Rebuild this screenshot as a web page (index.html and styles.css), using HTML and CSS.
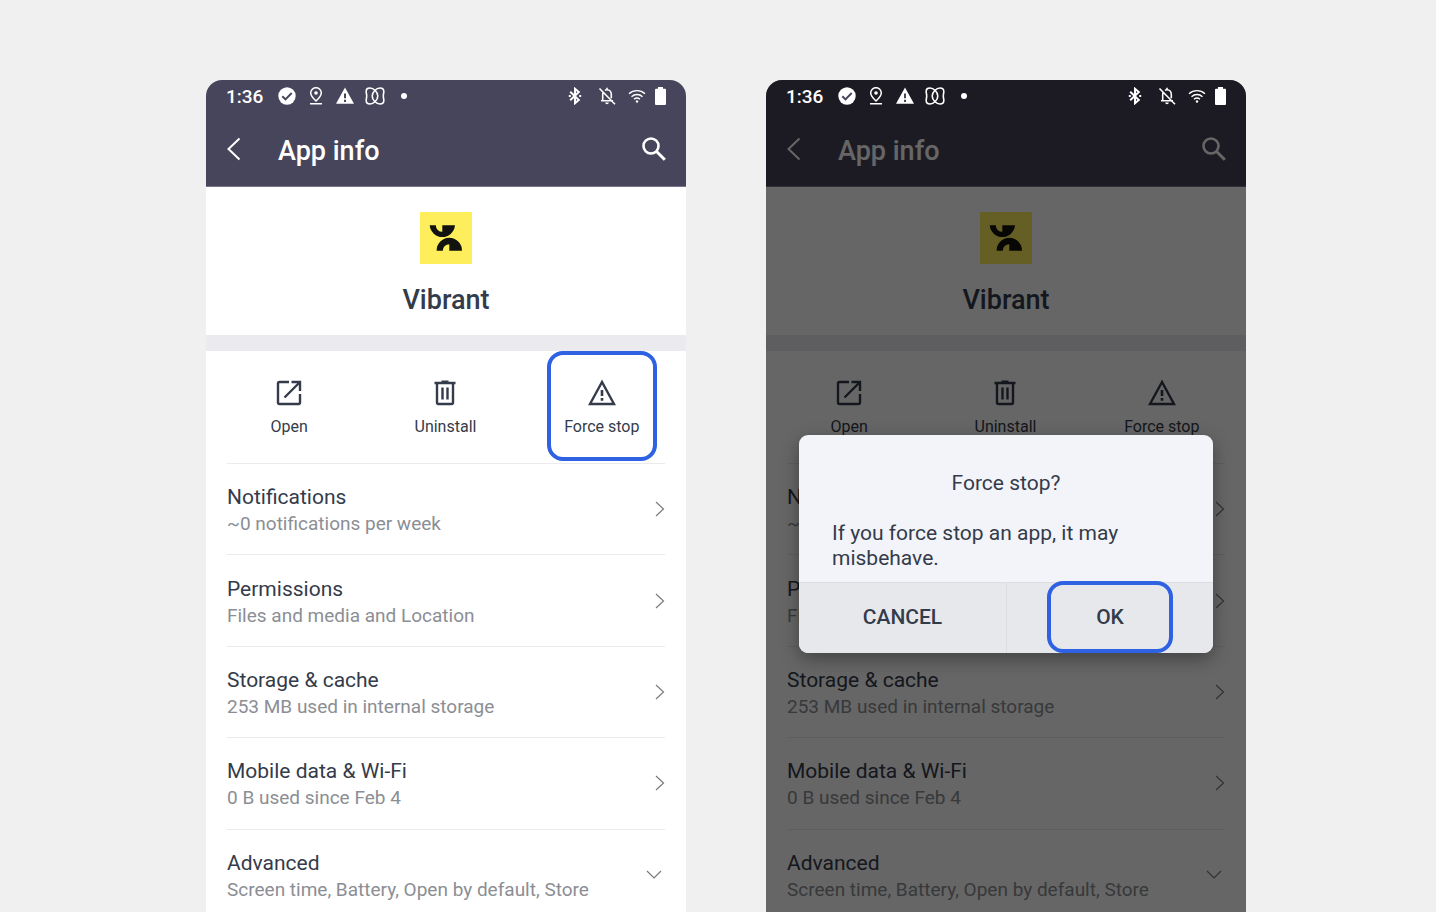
FILE: index.html
```
<!DOCTYPE html>
<html lang="en">
<head>
    <meta charset="UTF-8">
    <meta name="viewport" content="width=device-width, initial-scale=1.0">
    <title>App info</title>
    <link rel="stylesheet" href="styles.css">
</head>
<body>
    <!-- Icons shared by both phones -->
    <svg class="sprite" aria-hidden="true">
        <symbol id="i-check" viewBox="0 0 18 18">
            <circle cx="9" cy="9" r="8.7" fill="currentColor"/>
            <path class="cut" d="M4.300 9.200l3.200 3.200 6.200-6.400" fill="none" stroke-width="2"/>
        </symbol>
        <symbol id="i-pin" viewBox="0 0 18 18">
            <path d="M9 14C5.600 10.800 3.700 8.600 3.700 6a5.300 5.300 0 0 1 10.600 0c0 2.600-1.900 4.800-5.300 8zM3 16.800h12" fill="none" stroke="currentColor" stroke-width="1.500"/>
            <circle cx="9" cy="6" r="1.800" fill="currentColor"/>
        </symbol>
        <symbol id="i-alert" viewBox="0 0 18 18">
            <path d="M9 .5l9 16.300H0z" fill="currentColor"/>
            <path class="cut" d="M9 6.500v4.700M9 12.800v2.200" fill="none" stroke-width="2"/>
        </symbol>
        <symbol id="i-loop" viewBox="0 0 20 18">
            <path d="M5 1C2 1 1.200 2 1.200 4.500c0 2 .5 2.500.5 4.500s-.5 2.500-.5 4.500C1.200 16 2 17 5 17c3.500 0 7.800-4 7.800-8S8.500 1 5 1z" fill="none" stroke="currentColor" stroke-width="1.600"/>
            <path d="M15 1c3 0 3.800 1 3.800 3.500 0 2-.5 2.500-.5 4.500s.5 2.500.5 4.500c0 2.500-.8 3.500-3.800 3.500-3.500 0-7.800-4-7.800-8S11.500 1 15 1z" fill="none" stroke="currentColor" stroke-width="1.600"/>
        </symbol>
        <symbol id="i-bluetooth" viewBox="0 0 14 18">
            <path d="M2.200 4.800l8.600 8.200L7 16.200V1.800L10.800 5l-8.600 8.200" fill="none" stroke="currentColor" stroke-width="2"/>
            <path d="M0.800 8h2v2h-2zM11.200 8h2v2h-2z" fill="currentColor"/>
        </symbol>
        <symbol id="i-bell-off" viewBox="0 0 18 18">
            <path d="M3 13.800h12M4.700 13.800V7.500c0-1 .2-1.800.7-2.500M7 3.300c.6-.4 1.300-.6 2-.6 2.500 0 4.300 2 4.300 4.800v3.800M9 .8v2M1.500 1.500l15.500 15.800" fill="none" stroke="currentColor" stroke-width="1.600"/>
            <path d="M7.200 15.500h3.600a1.800 1.800 0 0 1-3.600 0z" fill="currentColor"/>
        </symbol>
        <symbol id="i-wifi" viewBox="0 0 18 14">
            <path d="M1 4.800c4.600-4.200 11.400-4.200 16 0M3.500 7.700c3.200-2.900 7.800-2.900 11 0M6 10.300c1.800-1.500 4.200-1.500 6 0" fill="none" stroke="currentColor" stroke-width="1.400"/>
            <circle cx="9" cy="12.500" r="1.200" fill="currentColor"/>
        </symbol>
        <symbol id="i-battery" viewBox="0 0 11 18">
            <path d="M3 0h5v1.800h2q1 0 1 1V17q0 1-1 1H1q-1 0-1-1V2.800q0-1 1-1h2z" fill="currentColor"/>
        </symbol>
        <symbol id="i-back" viewBox="0 0 14 24">
            <path d="M12.500 1.500L1.500 12l11 10.500" fill="none" stroke="currentColor" stroke-width="2"/>
        </symbol>
        <symbol id="i-search" viewBox="0 0 24 24">
            <circle cx="9" cy="9" r="7.500" fill="none" stroke="currentColor" stroke-width="2.600"/>
            <path d="M14.300 14.300l8.500 8.500" stroke="currentColor" stroke-width="3"/>
        </symbol>
        <symbol id="i-logo" viewBox="0 0 52 52">
            <path d="M0 0h52v52H0z" fill="#ffee5c"/>
            <path d="M9.700 13.300h6.100a6.500 6.500 0 0 0 6.500 6.500v-6.500H35a12.700 12.900 0 0 1-25.300 0zM16.600 38.700a12.700 12.900 0 0 1 25.400 0H29.300v-6.500a6.500 6.500 0 0 0-6.500 6.500z" fill="#121310"/>
        </symbol>
        <symbol id="i-open" viewBox="0 0 28 28">
            <path d="M14 3H4.500Q3 3 3 4.500v19Q3 25 4.500 25h19q1.500 0 1.500-1.500V15M16.500 3H25v9M25 3L9.500 18.500" fill="none" stroke="currentColor" stroke-width="2.400"/>
        </symbol>
        <symbol id="i-trash" viewBox="0 0 28 28">
            <path d="M3.500 4h21M10.500 2.800h7M6 4v19.500Q6 25 7.500 25h13q1.500 0 1.500-1.500V4M11.500 8.500v12M16.500 8.500v12" fill="none" stroke="currentColor" stroke-width="2.400"/>
        </symbol>
        <symbol id="i-warning" viewBox="0 0 28 28">
            <path d="M14 3L2 25h24z" fill="none" stroke="currentColor" stroke-width="2.400"/>
            <path d="M14 11v6M14 19v2.800" stroke="currentColor" stroke-width="2.600"/>
        </symbol>
        <symbol id="i-right" viewBox="0 0 10 16">
            <path d="M1 1l7.500 7L1 15" fill="none" stroke="currentColor" stroke-width="1.200"/>
        </symbol>
        <symbol id="i-down" viewBox="0 0 16 10">
            <path d="M1 1l7 7 7-7" fill="none" stroke="currentColor" stroke-width="1.200"/>
        </symbol>
    </svg>

    <main class="stage">
        <section class="phone">
            <header class="top">
                <div class="status">
                    <span class="time">1:36</span>
                    <svg class="s18"><use href="#i-check"/></svg>
                    <svg class="s18"><use href="#i-pin"/></svg>
                    <svg class="s18"><use href="#i-alert"/></svg>
                    <svg class="s20"><use href="#i-loop"/></svg>
                    <span class="dot"></span>
                    <div class="status-right">
                        <svg class="s14"><use href="#i-bluetooth"/></svg>
                        <svg class="s18"><use href="#i-bell-off"/></svg>
                        <svg class="wifi"><use href="#i-wifi"/></svg>
                        <svg class="battery"><use href="#i-battery"/></svg>
                    </div>
                </div>
                <div class="title-bar">
                    <button class="icon-btn" aria-label="Back"><svg class="back"><use href="#i-back"/></svg></button>
                    <h1>App info</h1>
                    <button class="icon-btn" aria-label="Search"><svg class="search"><use href="#i-search"/></svg></button>
                </div>
            </header>
            <div class="app">
                <svg class="logo"><use href="#i-logo"/></svg>
                <h2>Vibrant</h2>
            </div>
            <div class="actions">
                <button class="action"><svg><use href="#i-open"/></svg>Open</button>
                <button class="action"><svg><use href="#i-trash"/></svg>Uninstall</button>
                <button class="action highlight"><svg><use href="#i-warning"/></svg>Force stop</button>
            </div>
            <nav class="settings">
                <a href="#" class="row">
                    <span class="label">Notifications<small>~0 notifications per week</small></span>
                    <svg class="right"><use href="#i-right"/></svg>
                </a>
                <a href="#" class="row">
                    <span class="label">Permissions<small>Files and media and Location</small></span>
                    <svg class="right"><use href="#i-right"/></svg>
                </a>
                <a href="#" class="row">
                    <span class="label">Storage &amp; cache<small>253 MB used in internal storage</small></span>
                    <svg class="right"><use href="#i-right"/></svg>
                </a>
                <a href="#" class="row">
                    <span class="label">Mobile data &amp; Wi-Fi<small>0 B used since Feb 4</small></span>
                    <svg class="right"><use href="#i-right"/></svg>
                </a>
                <a href="#" class="row">
                    <span class="label">Advanced<small>Screen time, Battery, Open by default, Store</small></span>
                    <svg class="down"><use href="#i-down"/></svg>
                </a>
            </nav>
        </section>

        <section class="phone dimmed">
            <header class="top">
                <div class="status">
                    <span class="time">1:36</span>
                    <svg class="s18"><use href="#i-check"/></svg>
                    <svg class="s18"><use href="#i-pin"/></svg>
                    <svg class="s18"><use href="#i-alert"/></svg>
                    <svg class="s20"><use href="#i-loop"/></svg>
                    <span class="dot"></span>
                    <div class="status-right">
                        <svg class="s14"><use href="#i-bluetooth"/></svg>
                        <svg class="s18"><use href="#i-bell-off"/></svg>
                        <svg class="wifi"><use href="#i-wifi"/></svg>
                        <svg class="battery"><use href="#i-battery"/></svg>
                    </div>
                </div>
                <div class="title-bar">
                    <button class="icon-btn" aria-label="Back"><svg class="back"><use href="#i-back"/></svg></button>
                    <h1>App info</h1>
                    <button class="icon-btn" aria-label="Search"><svg class="search"><use href="#i-search"/></svg></button>
                </div>
            </header>
            <div class="app">
                <svg class="logo"><use href="#i-logo"/></svg>
                <h2>Vibrant</h2>
            </div>
            <div class="actions">
                <button class="action"><svg><use href="#i-open"/></svg>Open</button>
                <button class="action"><svg><use href="#i-trash"/></svg>Uninstall</button>
                <button class="action"><svg><use href="#i-warning"/></svg>Force stop</button>
            </div>
            <nav class="settings">
                <a href="#" class="row">
                    <span class="label">Notifications<small>~0 notifications per week</small></span>
                    <svg class="right"><use href="#i-right"/></svg>
                </a>
                <a href="#" class="row">
                    <span class="label">Permissions<small>Files and media and Location</small></span>
                    <svg class="right"><use href="#i-right"/></svg>
                </a>
                <a href="#" class="row">
                    <span class="label">Storage &amp; cache<small>253 MB used in internal storage</small></span>
                    <svg class="right"><use href="#i-right"/></svg>
                </a>
                <a href="#" class="row">
                    <span class="label">Mobile data &amp; Wi-Fi<small>0 B used since Feb 4</small></span>
                    <svg class="right"><use href="#i-right"/></svg>
                </a>
                <a href="#" class="row">
                    <span class="label">Advanced<small>Screen time, Battery, Open by default, Store</small></span>
                    <svg class="down"><use href="#i-down"/></svg>
                </a>
            </nav>
            <div class="scrim"></div>
            <div class="dialog" role="dialog" aria-labelledby="dialog-title">
                <div class="dialog-body">
                    <h3 id="dialog-title">Force stop?</h3>
                    <p>If you force stop an app, it may misbehave.</p>
                </div>
                <div class="dialog-buttons">
                    <div class="cell"><button>CANCEL</button></div>
                    <div class="cell"><button class="highlight">OK</button></div>
                </div>
            </div>
        </section>
    </main>
</body>
</html>
```
FILE: styles.css
```
* {
    box-sizing: border-box;
}
body {
    margin: 0;
    background-color: #f0f0f0;
    font-family: Roboto, "Liberation Sans", sans-serif;
    color: #343b4a;
}
h1, h2, h3, p {
    margin: 0;
}
button {
    padding: 0;
    border: none;
    background: none;
    color: inherit;
    font-family: inherit;
    cursor: pointer;
}
svg {
    display: block;
    flex: none;
}
.sprite {
    position: absolute;
    width: 0;
    height: 0;
}
.stage {
    display: grid;
    grid-template-columns: 1fr 1fr;
    gap: 80px;
    height: 100vh;
    padding: 80px 190px 0 206px;
    overflow: hidden;
}
.phone {
    position: relative;
    min-height: 0;
    background-color: #fff;
    border-radius: 16px 16px 0 0;
    overflow: hidden;
}

/* status bar and title */
.top {
    height: 107px;
    background-color: #47455b;
    border-bottom: 1px solid #77758a;
    color: #fff;
}
.status {
    position: relative;
    z-index: 2;
    display: flex;
    align-items: center;
    gap: 11px;
    height: 32px;
    padding: 0 20px;
}
.time {
    margin-right: 4px;
    font-size: 19px;
    font-weight: 500;
}
.cut {
    stroke: #47455b;
}
.s14 {
    width: 14px;
    height: 18px;
    margin-right: 4px;
}
.s18 {
    width: 18px;
    height: 18px;
}
.s20 {
    width: 20px;
    height: 18px;
}
.dot {
    width: 6px;
    height: 6px;
    margin-left: 5px;
    border-radius: 50%;
    background-color: #fff;
}
.status-right {
    display: flex;
    align-items: center;
    gap: 12px;
    margin-left: auto;
}
.wifi {
    width: 18px;
    height: 14px;
    margin-right: -3px;
}
.battery {
    width: 11px;
    height: 18px;
}
.title-bar {
    display: flex;
    align-items: center;
    height: 74px;
    padding: 0 20px 0 21px;
}
.title-bar h1 {
    flex: 1;
    margin-left: 37px;
    padding-top: 4px;
    font-size: 27px;
    font-weight: 500;
    line-height: 32px;
}
.back {
    width: 14px;
    height: 24px;
}
.search {
    width: 24px;
    height: 24px;
}

/* app name */
.app {
    display: flex;
    flex-direction: column;
    align-items: center;
    height: 164px;
    padding-top: 25px;
    border-bottom: 16px solid #ebebef;
}
.logo {
    width: 52px;
    height: 52px;
}
.app h2 {
    margin-top: 20px;
    font-size: 27px;
    font-weight: 500;
    line-height: 32px;
}

/* Open / Uninstall / Force stop */
.actions {
    display: grid;
    grid-template-columns: repeat(3, 1fr);
    justify-items: center;
    height: 112px;
    padding: 0 6px 0 5px;
}
.action {
    display: flex;
    flex-direction: column;
    align-items: center;
    gap: 10px;
    width: 110px;
    height: 110px;
    padding-top: 24px;
    border: 4px solid transparent;
    font-size: 16px;
    line-height: 20px;
}
.action svg {
    width: 28px;
    height: 28px;
}
.highlight {
    border: 4px solid #2f62e3;
    border-radius: 16px;
}

/* settings list */
.settings {
    display: grid;
    grid-auto-rows: 1fr;
    min-height: 457px;
    margin: 0 21px;
}
.row {
    display: flex;
    align-items: center;
    justify-content: space-between;
    border-top: 1px solid #ebebed;
    color: inherit;
    text-decoration: none;
}
.label {
    padding-top: 2px;
    font-size: 21px;
    line-height: 28px;
    white-space: nowrap;
}
.label small {
    display: block;
    color: #8b8e94;
    font-size: 19px;
    line-height: 26px;
}
.right, .down {
    color: #777a80;
}
.right {
    width: 10px;
    height: 16px;
}
.down {
    width: 16px;
    height: 10px;
    margin-right: 3px;
}

/* force stop dialog */
.dimmed .cut {
    stroke: #1c1c24;
}
.scrim {
    position: absolute;
    inset: 0;
    z-index: 1;
    background-color: rgba(0, 0, 0, 0.6);
}
.dialog {
    position: absolute;
    top: 355px;
    left: 33px;
    right: 33px;
    z-index: 3;
    border-radius: 9px;
    background-color: #f3f4f9;
    box-shadow: 0 6px 18px rgba(0, 0, 0, 0.35);
}
.dialog-body {
    padding: 36px 33px 11px;
    font-size: 21px;
    line-height: 25px;
}
.dialog-body h3 {
    margin-bottom: 25px;
    font-size: 21px;
    font-weight: 400;
    text-align: center;
}
.dialog-buttons {
    display: grid;
    grid-template-columns: 1fr 1fr;
    height: 71px;
    border-top: 1px solid #dcdde1;
    border-radius: 0 0 9px 9px;
    background-color: #e7e8ec;
}
.cell {
    display: flex;
    align-items: flex-end;
    justify-content: center;
}
.cell + .cell {
    border-left: 1px solid #dcdde1;
}
.cell button {
    width: 126px;
    height: 72px;
    margin-top: -2px;
    font-size: 21px;
    font-weight: 500;
}
```
